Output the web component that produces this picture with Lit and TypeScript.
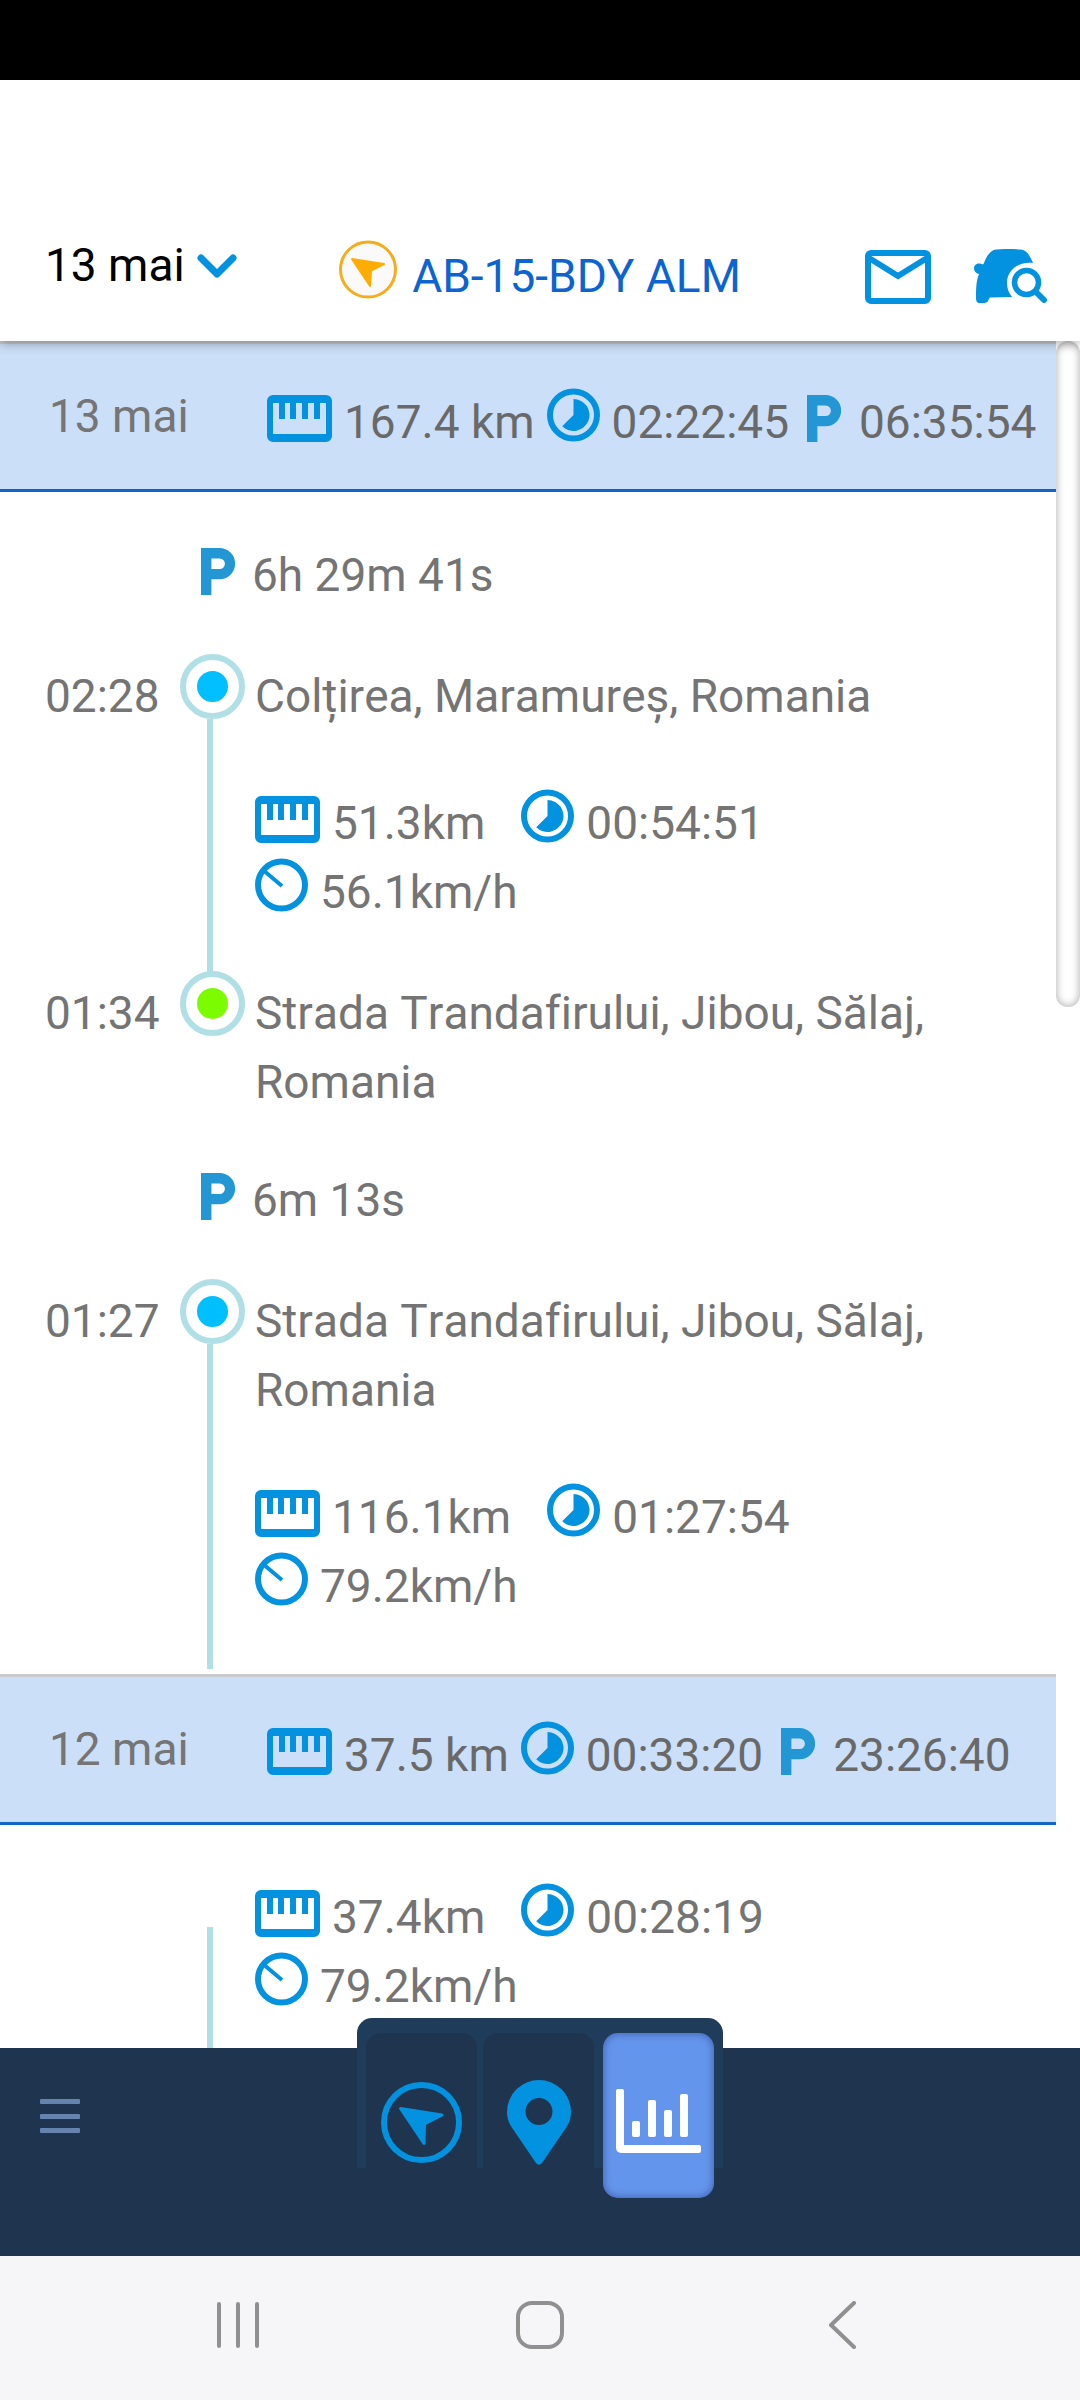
import { LitElement, html, css, svg, nothing } from "lit";
import { customElement, property } from "lit/decorators.js";

type Stats = { kind: "stats"; distance: string; duration: string; speed: string; first?: boolean };
type Stop = { kind: "stop"; time: string; place: string; state: "arrival" | "departure" };
type Parking = { kind: "parking"; duration: string };
type Entry = Stats | Stop | Parking;

interface Day {
  date: string;
  distance: string;
  driving: string;
  parked: string;
  entries: Entry[];
}

const DAYS: Day[] = [
  {
    date: "13 mai",
    distance: "167.4 km",
    driving: "02:22:45",
    parked: "06:35:54",
    entries: [
      { kind: "parking", duration: "6h 29m 41s" },
      { kind: "stop", time: "02:28", place: "Colțirea, Maramureș, Romania", state: "arrival" },
      { kind: "stats", distance: "51.3km", duration: "00:54:51", speed: "56.1km/h" },
      { kind: "stop", time: "01:34", place: "Strada Trandafirului, Jibou, Sălaj, Romania", state: "departure" },
      { kind: "parking", duration: "6m 13s" },
      { kind: "stop", time: "01:27", place: "Strada Trandafirului, Jibou, Sălaj, Romania", state: "arrival" },
      { kind: "stats", distance: "116.1km", duration: "01:27:54", speed: "79.2km/h" },
    ],
  },
  {
    date: "12 mai",
    distance: "37.5 km",
    driving: "00:33:20",
    parked: "23:26:40",
    entries: [
      { kind: "stats", distance: "37.4km", duration: "00:28:19", speed: "79.2km/h", first: true },
    ],
  },
];

const icon = (width: number, height: number, body: unknown) => html`<svg
  class="icon"
  width=${width}
  height=${height}
  viewBox="0 0 ${width} ${height}"
  aria-hidden="true"
>${body}</svg>`;

const BLUE = "#0392df";

const rulerIcon = icon(65, 54, svg`
  <path fill=${BLUE} fill-rule="evenodd" d="M6 7h53a6 6 0 0 1 6 6v35a6 6 0 0 1-6 6H6a6 6 0 0 1-6-6V13a6 6 0 0 1 6-6z
    M6 15v31h53V15h-6v16h-6V15h-6v16h-6V15h-6v16h-6V15h-5v16h-6V15z"/>`);

const clockIcon = icon(53, 54, svg`
  <circle cx="26.5" cy="27" r="23.5" fill="none" stroke=${BLUE} stroke-width="6"/>
  <path fill=${BLUE} d="M26.5 11a16 16 0 1 1-11.3 27.3L26.5 27z"/>`);

const speedIcon = icon(53, 54, svg`
  <circle cx="26.5" cy="27" r="23.5" fill="none" stroke=${BLUE} stroke-width="6"/>
  <path fill="none" stroke=${BLUE} stroke-width="4" d="M8 12l19 16"/>`);

const parkingIcon = icon(34, 54, svg`
  <path fill="#2397d4" fill-rule="evenodd" d="M0 7h18.500a15.600 15.600 0 0 1 0 31.200H10.400V54H0z
    M10.400 17.500v10.400h8.300a5.200 5.200 0 0 0 0-10.400z"/>`);

const chevronIcon = icon(40, 24, svg`
  <path fill="none" stroke=${BLUE} stroke-width="7" stroke-linecap="round" stroke-linejoin="round" d="M4 4l16 16L36 4"/>`);

const headingIcon = icon(58, 59, svg`
  <circle cx="29" cy="29.500" r="27.500" fill="#fafafa" stroke="#f5ad1d" stroke-width="3"/>
  <path fill="#ffac05" stroke="#ffac05" stroke-width="2" stroke-linejoin="round" d="M13 19l32 5-13 6.500-1 15.500z"/>`);

const mailIcon = icon(66, 54, svg`
  <rect x="3" y="3" width="60" height="48" rx="3" fill="none" stroke=${BLUE} stroke-width="6"/>
  <path fill="none" stroke=${BLUE} stroke-width="6" d="M4 8l29 18L62 8"/>`);

const carSearchIcon = icon(74, 56, svg`
  <path fill=${BLUE} d="M10 14C13 6 17 1 22 .500Q35-.600 47 .500C53 1 56 7 59 14
    C45 12 33 21 33 34C33 40 35 44 38 48L16 48.500C14 50 15 54 10 54H6C3 54 2 52 2 49
    C2 41 2 32 5 25C1 24 0 21 0 19C0 15 5 13 9 15.500z"/>
  <circle cx="52.500" cy="33.500" r="12" fill="none" stroke=${BLUE} stroke-width="5.500"/>
  <path stroke=${BLUE} stroke-width="6" stroke-linecap="round" d="M61.500 42.500l8.500 8.500"/>`);

const menuIcon = icon(40, 34, svg`
  <g fill="#6583ad"><rect width="40" height="5" rx="1"/><rect y="15" width="40" height="5" rx="1"/><rect y="29" width="40" height="5" rx="1"/></g>`);

const compassIcon = icon(81, 81, svg`
  <circle cx="40.500" cy="40.500" r="37.500" fill="none" stroke=${BLUE} stroke-width="6"/>
  <path fill=${BLUE} stroke=${BLUE} stroke-width="3" stroke-linejoin="round" d="M19.500 26.500l41.500 6.500-17.500 9-.500 19.500z"/>`);

const pinIcon = icon(64, 85, svg`
  <path fill=${BLUE} fill-rule="evenodd" d="M32 0a32 32 0 0 1 32 32c0 6-1.500 10-4.500 15L35 83q-3 3.500-6 0L4.500 47C1.500 42 0 38 0 32A32 32 0 0 1 32 0z
    M32 18a13.500 13.500 0 1 0 0 27a13.500 13.500 0 0 0 0-27z"/>`);

const chartIcon = icon(85, 64, svg`
  <g fill="#fff">
    <path d="M2 0h4a2 2 0 0 1 2 2v54h75a2 2 0 0 1 2 2v4a2 2 0 0 1-2 2H5a5 5 0 0 1-5-5V2a2 2 0 0 1 2-2z"/>
    <rect x="16" y="32" width="8" height="16" rx="2"/>
    <rect x="32" y="11" width="8" height="37" rx="2"/>
    <rect x="48" y="21" width="8" height="27" rx="2"/>
    <rect x="64" y="5" width="8" height="43" rx="2"/>
  </g>`);

const recentsIcon = icon(42, 48, svg`
  <path stroke="#909090" stroke-width="4" stroke-linecap="round" d="M2 3v42M21 3v42M40 3v42"/>`);

const homeIcon = icon(48, 48, svg`
  <rect x="2" y="2" width="44" height="44" rx="14" fill="none" stroke="#909090" stroke-width="4"/>`);

const backIcon = icon(28, 48, svg`
  <path fill="none" stroke="#909090" stroke-width="4" stroke-linecap="round" stroke-linejoin="round" d="M26 2L3 24l23 22"/>`);

const shared = css`
  * {
    box-sizing: border-box;
  }
  .icon {
    display: block;
    flex: none;
  }
  button {
    font: inherit;
    color: inherit;
    background: none;
    border: 0;
    padding: 0;
    margin: 0;
  }
`;

@customElement("trip-day")
export class TripDay extends LitElement {
  @property({ attribute: false }) day!: Day;

  static styles = [
    shared,
    css`
      :host {
        display: block;
      }
      .summary {
        display: flex;
        background: #cbdff8;
        border-top: 3px solid #c8cacd;
        border-bottom: 3px solid #1266c6;
        padding-left: 49px;
        height: 151px;
      }
      .date {
        margin: 0;
        font-size: 46px;
        font-weight: 400;
        line-height: 69px;
        width: 218px;
        padding-top: 38px;
        color: #757575;
      }
      .totals {
        display: flex;
        padding-top: 44px;
        gap: 12px;
        color: #696969;
        white-space: nowrap;
      }
      .metric {
        display: flex;
        gap: 12px;
      }
      .total-parked {
        gap: 18px;
        padding-left: 6px;
      }
      .entries {
        list-style: none;
        margin: 0;
        padding: 0 0 5px;
      }
      .entry {
        display: grid;
        grid-template-columns: 135px 65px 1fr;
        padding-left: 45px;
      }
      .rail {
        display: flex;
        flex-direction: column;
      }
      .track {
        flex: 1;
        width: 6px;
        margin-left: 27px;
        background: #b0dfe5;
      }
      .track-first {
        margin-top: 102px;
      }
      .ring {
        display: grid;
        place-items: center;
        flex: none;
        width: 65px;
        height: 65px;
        margin-top: -4px;
        border: 6px solid #b0dfe5;
        border-radius: 50%;
        background: #fff;
      }
      .dot {
        width: 31px;
        height: 31px;
        border-radius: 50%;
      }
      .arrival {
        background: #00bfff;
      }
      .departure {
        background: #7cfc00;
      }
      .time,
      .place {
        padding-top: 4px;
      }
      .place {
        padding-left: 10px;
        padding-right: 40px;
      }
      .parking {
        display: flex;
        gap: 17px;
        padding: 49px 0 48px 201px;
      }
      .figures {
        display: flex;
        flex-wrap: wrap;
        column-gap: 36px;
        padding: 58px 40px 48px 10px;
      }
    `,
  ];

  private renderEntry(entry: Entry) {
    switch (entry.kind) {
      case "parking":
        return html`<li class="parking">${parkingIcon}<span>${entry.duration}</span></li>`;
      case "stop":
        return html`<li class="entry">
          <time class="time">${entry.time}</time>
          <div class="rail">
            <div class="ring"><div class="dot ${entry.state}"></div></div>
            ${entry.state === "arrival" ? html`<div class="track"></div>` : nothing}
          </div>
          <div class="place">${entry.place}</div>
        </li>`;
      case "stats":
        return html`<li class="entry">
          <span></span>
          <div class="rail"><div class="track ${entry.first ? "track-first" : ""}"></div></div>
          <div class="figures">
            <div class="metric">${rulerIcon}<span>${entry.distance}</span></div>
            <div class="metric">${clockIcon}<span>${entry.duration}</span></div>
            <div class="metric">${speedIcon}<span>${entry.speed}</span></div>
          </div>
        </li>`;
    }
  }

  render() {
    const { date, distance, driving, parked, entries } = this.day;
    return html`
      <header class="summary">
        <h2 class="date">${date}</h2>
        <div class="totals">
          <div class="metric">${rulerIcon}<span>${distance}</span></div>
          <div class="metric">${clockIcon}<span>${driving}</span></div>
          <div class="metric total-parked">${parkingIcon}<span>${parked}</span></div>
        </div>
      </header>
      <ul class="entries">${entries.map((entry) => this.renderEntry(entry))}</ul>
    `;
  }
}

@customElement("app-root")
export class AppRoot extends LitElement {
  static styles = [
    shared,
    css`
      :host {
        display: flex;
        flex-direction: column;
        height: 100vh;
        overflow: hidden;
        background: #fff;
        color: #747474;
        font-family: Roboto, "Liberation Sans", sans-serif;
        font-size: 46px;
        line-height: 69px;
        font-kerning: none;
        font-variant-ligatures: none;
      }
      .status {
        flex: none;
        height: 80px;
        background: #000;
      }
      .top {
        position: relative;
        z-index: 1;
        flex: none;
        display: grid;
        grid-template-columns: 1fr auto 1fr;
        align-items: start;
        height: 261px;
        padding: 151px 32px 0;
        background: #fff;
        box-shadow: 0 3px 10px rgba(0, 0, 0, 0.3);
      }
      .period {
        display: flex;
        align-items: center;
        gap: 12px;
        justify-self: start;
        padding-left: 13px;
        color: #000;
      }
      .vehicle {
        display: flex;
        gap: 15px;
        padding-top: 9px;
      }
      .plate {
        margin: 0;
        padding-top: 2px;
        font-size: 46px;
        font-weight: 400;
        line-height: 69px;
        color: #0b64d0;
      }
      .actions {
        display: flex;
        justify-content: flex-end;
        gap: 43px;
        padding-top: 18px;
      }
      .content {
        flex: 1;
        min-height: 0;
        display: flex;
        overflow: hidden;
      }
      .days {
        flex: 1;
        min-width: 0;
      }
      .scrollbar {
        width: 24px;
        flex: none;
      }
      .thumb {
        height: 39%;
        border-radius: 12px;
        background: #fff;
        box-shadow: inset 0 0 8px rgba(0, 0, 0, 0.35);
      }
      .bottom {
        position: relative;
        flex: none;
        display: grid;
        grid-template-columns: 1fr auto 1fr;
        align-items: start;
        height: 208px;
        padding: 0 40px;
        background: #1f344e;
      }
      .menu {
        justify-self: start;
        padding-top: 51px;
      }
      .tabs {
        display: flex;
        align-items: flex-start;
        gap: 6px;
        height: 150px;
        margin-top: -30px;
        padding: 15px 9px 0;
        border-radius: 15px 15px 0 0;
        background: #1f3d5a;
      }
      .tab {
        display: flex;
        justify-content: center;
        align-items: center;
        width: 111px;
        height: 165px;
        padding-top: 14px;
        border-radius: 15px;
        background: #1f344e;
      }
      .tab-active {
        margin-left: 3px;
        padding-top: 10px;
        background: #6495ec;
        box-shadow: inset 0 0 9px rgba(0, 0, 60, 0.4);
      }
      .system {
        flex: none;
        display: grid;
        grid-template-columns: repeat(3, 1fr);
        place-items: center;
        height: 144px;
        padding: 0 8%;
        padding-bottom: 6px;
        background: #f6f6f9;
      }
    `,
  ];

  render() {
    return html`
      <div class="status"></div>
      <header class="top">
        <button class="period">13 mai ${chevronIcon}</button>
        <div class="vehicle">
          ${headingIcon}
          <h1 class="plate">AB-15-BDY ALM</h1>
        </div>
        <div class="actions">
          <button aria-label="Mesaje">${mailIcon}</button>
          <button aria-label="Caută vehicul">${carSearchIcon}</button>
        </div>
      </header>
      <main class="content">
        <div class="days">${DAYS.map((day) => html`<trip-day .day=${day}></trip-day>`)}</div>
        <div class="scrollbar"><div class="thumb"></div></div>
      </main>
      <nav class="bottom">
        <button class="menu" aria-label="Meniu">${menuIcon}</button>
        <div class="tabs">
          <button class="tab" aria-label="Navigare">${compassIcon}</button>
          <button class="tab" aria-label="Hartă">${pinIcon}</button>
          <button class="tab tab-active" aria-label="Rapoarte">${chartIcon}</button>
        </div>
      </nav>
      <footer class="system">
        <button aria-label="Recente">${recentsIcon}</button>
        <button aria-label="Acasă">${homeIcon}</button>
        <button aria-label="Înapoi">${backIcon}</button>
      </footer>
    `;
  }
}
